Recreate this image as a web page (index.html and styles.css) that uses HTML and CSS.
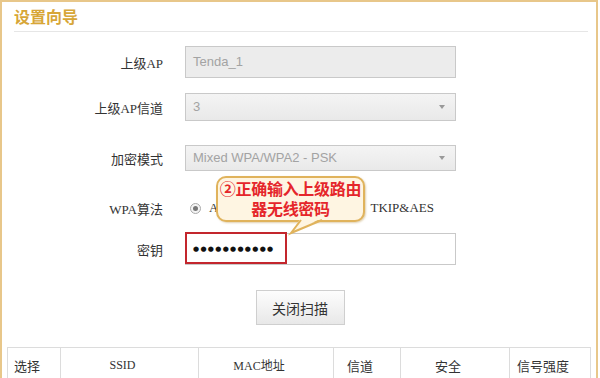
FILE: index.html
```html
<!DOCTYPE html>
<html lang="zh-CN">
<head>
    <meta charset="UTF-8">
    <meta name="viewport" content="width=device-width, initial-scale=1.0">
    <title>设置向导</title>
    <link rel="stylesheet" href="styles.css">
</head>
<body>
    <div class="wizard">
        <div class="head">
            <h1>设置向导</h1>
        </div>

        <div class="row row-ap">
            <label class="name">上级AP</label>
            <div class="field field-disabled">Tenda_1</div>
        </div>
        <div class="row row-channel">
            <label class="name">上级AP信道</label>
            <div class="field field-select">3<span class="arrow"></span></div>
        </div>
        <div class="row row-mode">
            <label class="name">加密模式</label>
            <div class="field field-select">Mixed WPA/WPA2 - PSK<span class="arrow"></span></div>
        </div>
        <div class="row row-algo">
            <label class="name">WPA算法</label>
            <div class="radios">
                <span class="radio checked"></span><span class="opt">AES</span>
                <span class="radio"></span><span class="opt">TKIP</span>
                <span class="radio"></span><span class="opt">TKIP&amp;AES</span>
            </div>
        </div>
        <div class="row row-key">
            <label class="name">密钥</label>
            <div class="field field-key">●●●●●●●●●●●</div>
        </div>

        <div class="actions">
            <button class="btn">关闭扫描</button>
        </div>

        <table class="scan">
            <colgroup>
                <col style="width: 53px">
                <col style="width: 138px">
                <col style="width: 135px">
                <col style="width: 67px">
                <col style="width: 109px">
                <col style="width: 81px">
            </colgroup>
            <tr>
                <th>选择</th>
                <th class="latin">SSID</th>
                <th class="latin">MAC地址</th>
                <th>信道</th>
                <th>安全</th>
                <th>信号强度</th>
            </tr>
        </table>

        <div class="mark"></div>
        <div class="bubble">②正确输入上级路由<br>器无线密码</div>
        <svg class="tail" width="40" height="18" viewBox="0 0 40 18">
            <polygon points="15,0 5,15 36,0" fill="#fef5e2"/>
            <polyline points="15,2 5,15 36,2" fill="none" stroke="#e0b35c" stroke-width="2"/>
        </svg>
    </div>
</body>
</html>
```

FILE: styles.css
```css
body {
    margin: 0;
    padding: 0;
    font-family: "Noto Sans CJK SC", sans-serif;
    background: #fff;
}
.wizard {
    position: relative;
    width: 598px;
    height: 378px;
    box-sizing: border-box;
    border: 2px solid #e8c78a;
    border-bottom: 0;
    overflow: hidden;
}
.head {
    margin: 0 8px 0 12px;
    height: 29px;
    border-bottom: 1px solid #e6e6e6;
}
.head h1 {
    margin: 0;
    padding-top: 3px;
    font-size: 16px;
    line-height: 22px;
    font-weight: bold;
    color: #d7a637;
}
.row {
    display: flex;
    align-items: center;
    height: 32px;
}
.row-ap { margin-top: 14px; }
.row-channel { margin-top: 13px; }
.row-mode { margin-top: 19px; }
.row-algo { margin-top: 18px; }
.row-key { margin-top: 9px; }
.name {
    width: 161px;
    margin-right: 22px;
    text-align: right;
    font-family: "Liberation Serif", "Noto Sans CJK SC", serif;
    font-size: 13px;
    color: #333;
}
.field {
    position: relative;
    width: 271px;
    height: 32px;
    box-sizing: border-box;
    border: 1px solid #c9c9c9;
    padding-left: 7px;
    font-family: "Liberation Sans", sans-serif;
    font-size: 13px;
    line-height: 30px;
    color: #a3a3a3;
}
.field-disabled {
    background: #ececec;
}
.field-select {
    height: 28px;
    line-height: 26px;
    background: linear-gradient(#f4f4f4, #e9e9e9);
}
.row-mode .field-select {
    height: 26px;
    line-height: 24px;
}
.arrow {
    position: absolute;
    right: 10px;
    top: 50%;
    margin-top: -2px;
    border-left: 3px solid transparent;
    border-right: 3px solid transparent;
    border-top: 4px solid #999;
}
.field-key {
    background: #fff;
    color: #111;
    font-family: "DejaVu Sans", sans-serif;
    font-size: 7px;
    letter-spacing: 1.3px;
}
.radios {
    display: flex;
    align-items: center;
    font-family: "Liberation Serif", serif;
    font-size: 13px;
    color: #333;
}
.radio {
    width: 9px;
    height: 9px;
    margin: 0 8px 0 5px;
    border: 1px solid #aaa;
    border-radius: 50%;
    background: #f4f4f4;
    position: relative;
}
.radio.checked::after {
    content: "";
    position: absolute;
    left: 2px;
    top: 2px;
    width: 5px;
    height: 5px;
    border-radius: 50%;
    background: #777;
}
.opt {
    margin-right: 30px;
}
.actions {
    margin-top: 25px;
    text-align: center;
}
.btn {
    width: 89px;
    height: 35px;
    border: 1px solid #cfcfcf;
    background: linear-gradient(#fdfdfd, #e8e8e8);
    font-family: "Noto Sans CJK SC", sans-serif;
    font-size: 14px;
    color: #333;
    margin-left: 2px;
}
.scan {
    margin: 22px 0 0 5px;
    width: 583px;
    table-layout: fixed;
    border-collapse: collapse;
    font-size: 13px;
    color: #333;
}
.scan th {
    height: 34px;
    border: 1px solid #dcdcdc;
    font-weight: normal;
    text-align: center;
    padding: 0 14px 0 0;
    white-space: nowrap;
}
.scan th.latin {
    font-family: "Liberation Serif", "Noto Sans CJK SC", serif;
    font-size: 12px;
}
.mark {
    position: absolute;
    left: 183px;
    top: 230px;
    width: 102px;
    height: 32px;
    box-sizing: border-box;
    border: 2px solid #c3262d;
}
.bubble {
    position: absolute;
    left: 214px;
    top: 174px;
    width: 149px;
    height: 46px;
    box-sizing: border-box;
    border: 2px solid #e0b35c;
    border-radius: 10px;
    background: #fef5e2;
    box-shadow: 1px 1px 2px rgba(180, 140, 60, 0.4);
    text-align: center;
    font-size: 16px;
    font-weight: bold;
    line-height: 20px;
    color: #e5262b;
    letter-spacing: -0.3px;
}
.tail {
    position: absolute;
    left: 284px;
    top: 216px;
}
```
